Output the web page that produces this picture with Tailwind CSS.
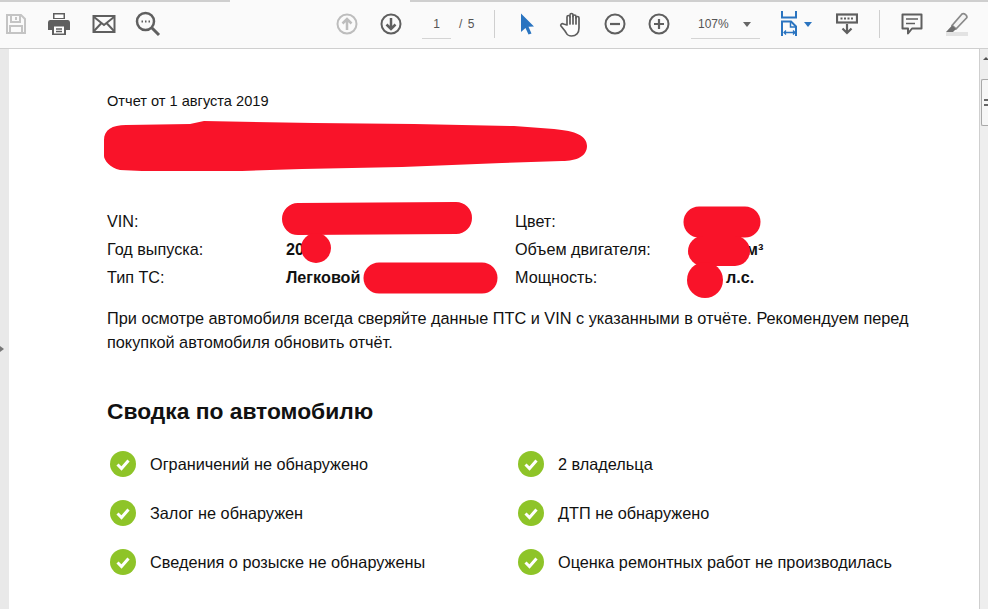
<!DOCTYPE html>
<html lang="ru">
  <head>
    <meta charset="UTF-8" />
    <title>Отчет</title>
    <script src="https://cdn.jsdelivr.net/npm/@tailwindcss/browser@4"></script>
  </head>
  <body class="h-screen overflow-hidden bg-white font-['Liberation_Sans',Arial,sans-serif] text-[#111]">
    <!-- toolbar -->
    <div class="relative flex h-[49px] items-center border-b border-[#cfcfcf] bg-[#fafafa]">
      <div class="absolute left-0 top-0 h-[2px] w-[230px] bg-[#cfcfcf]"></div>
      <div class="absolute right-0 top-0 h-[2px] w-[578px] bg-[#cfcfcf]"></div>

      <div class="flex w-[32px] justify-center">
        <svg width="22" height="22" viewBox="0 0 22 22" fill="none" stroke="#c4c4c4" stroke-width="2"><path d="M2 2h14l4 4v14H2z"/><path d="M6 2v7h9V2M5 20v-7h12v7"/><path d="M11 4v3"/></svg>
      </div>
      <div class="ml-[5px] flex w-11 justify-center">
        <svg width="24" height="24" viewBox="0 0 24 24"><path fill="#5f5f5f" d="M6 1h12v6H6zM3 8h18a2.500 2.500 0 0 1 2 2.500V18h-4v5H5v-5H1v-7.500A2.500 2.500 0 0 1 3 8z"/><path fill="#fff" d="M7.500 2.500h9V6h-9zM7 14.500h10V21.500H7z"/><path stroke="#5f5f5f" stroke-width="1.500" d="M9 17h6M9 19.500h6"/></svg>
      </div>
      <div class="ml-px flex w-11 justify-center">
        <svg width="24" height="20" viewBox="0 0 24 20" fill="none" stroke="#5f5f5f" stroke-width="2"><rect x="1.500" y="2" width="21" height="16"/><path d="M2 3l10 8 10-8M2 17l7.500-8M22 17l-7.500-8"/></svg>
      </div>
      <div class="flex w-11 justify-center">
        <svg width="26" height="26" viewBox="0 0 26 26" fill="none" stroke="#5f5f5f"><circle cx="10.500" cy="10.500" r="8.500" stroke-width="2.500"/><path d="M17 17l7 7" stroke-width="3"/><path d="M6.500 10.500h1.500M10 10.500h1.500M13.500 10.500H15" stroke-width="2"/></svg>
      </div>

      <div class="ml-[155px] flex w-11 justify-center">
        <svg width="22" height="22" viewBox="0 0 22 22" fill="none" stroke="#bdbdbd" stroke-width="2"><circle cx="11" cy="11" r="9.500"/><path d="M11 17V6M6.500 10.500L11 6l4.500 4.500" stroke-width="2.500"/></svg>
      </div>
      <div class="flex w-11 justify-center">
        <svg width="22" height="22" viewBox="0 0 22 22" fill="none" stroke="#5f5f5f" stroke-width="2"><circle cx="11" cy="11" r="9.500"/><path d="M11 5v11M6.500 11.500L11 16l4.500-4.500" stroke-width="2.500"/></svg>
      </div>

      <div class="ml-[9px] h-[29px] w-[29px] border-b border-[#d4d4d4] pt-[7px] text-center text-[12px] leading-[15px] text-[#555]">1</div>
      <div class="ml-2 w-[15px] text-[12px] tracking-[1px] whitespace-nowrap text-[#555]">/ 5</div>

      <div class="ml-[20px] h-7 w-px bg-[#cfcfcf]"></div>

      <div class="ml-[10px] flex w-11 justify-center">
        <svg width="16" height="22" viewBox="0 0 16 22"><path fill="#2a74c0" d="M2 0.500L15 13.500L9.500 13.800L12.500 20.500L9.500 21.500L6.500 15L2 19z"/></svg>
      </div>
      <div class="flex w-11 justify-center">
        <svg width="24" height="25" viewBox="0 0 24 25" fill="#fff" stroke="#5f5f5f" stroke-width="1.700" stroke-linejoin="round" stroke-linecap="round"><path d="M8 13V5a1.500 1.500 0 0 1 3 0V3a1.500 1.500 0 0 1 3 0v1.500a1.500 1.500 0 0 1 3 0V6a1.500 1.500 0 0 1 3 0v10c0 5-3 8-7.500 8S8 22 6 19l-4-5c-1-1.500 1-3 2.500-2z"/><path d="M11 5v7M14 4v8M17 5v7"/></svg>
      </div>
      <div class="flex w-11 justify-center">
        <svg width="22" height="22" viewBox="0 0 22 22" fill="none" stroke="#5f5f5f" stroke-width="2"><circle cx="11" cy="11" r="9.500"/><path d="M6 11h10" stroke-width="2.200"/></svg>
      </div>
      <div class="flex w-11 justify-center">
        <svg width="22" height="22" viewBox="0 0 22 22" fill="none" stroke="#5f5f5f" stroke-width="2"><circle cx="11" cy="11" r="9.500"/><path d="M6 11h10M11 6v10" stroke-width="2.200"/></svg>
      </div>

      <div class="relative ml-[10px] h-[29px] w-[69px] border-b border-[#d4d4d4] pl-[7px] pt-[7px] text-[12px] leading-[15px] text-[#555]">
        107%
        <div class="absolute left-[52px] top-[12px] h-0 w-0 border-x-[4px] border-t-[5px] border-x-transparent border-t-[#666]"></div>
      </div>

      <div class="ml-[20px] flex w-[40px] items-center">
        <svg width="20" height="26" viewBox="0 0 20 26" fill="none" stroke="#2a74c0" stroke-width="2"><path d="M2 0v6.500h14V0M2 25V10.500h9l5 5V25"/><path d="M10.500 10.500v5.500h5.500" stroke-width="1.500"/><path d="M4 21.500h11M6 19.500l-2 2 2 2M13 19.500l2 2-2 2" stroke-width="1.300"/></svg>
        <div class="ml-[4px] h-0 w-0 border-x-[4px] border-t-[5px] border-x-transparent border-t-[#2a74c0]"></div>
      </div>

      <div class="ml-[5px] flex w-11 justify-center">
        <svg width="22" height="22" viewBox="0 0 22 22" fill="none" stroke="#5f5f5f"><rect x="1" y="1.500" width="20" height="8" stroke-width="2.200"/><path d="M4.500 5.500h2M8 5.500h2M11.500 5.500h2M15 5.500h2" stroke-width="2"/><path d="M11 11v9M6.500 15.500L11 20l4.500-4.500" stroke-width="2.200"/></svg>
      </div>

      <div class="ml-[10px] h-7 w-px bg-[#cfcfcf]"></div>

      <div class="ml-[10px] flex w-11 justify-center">
        <svg width="22" height="22" viewBox="0 0 22 22" fill="none" stroke="#5f5f5f" stroke-width="2"><path d="M1.500 1.500h19v14h-9.500l-4 5v-5H1.500z" stroke-linejoin="round"/><path d="M5 6h12M5 10.500h9" stroke-width="1.500"/></svg>
      </div>
      <div class="ml-px flex w-11 justify-center">
        <svg width="24" height="24" viewBox="0 0 24 24"><path fill="#e3e3e3" d="M1 20h22v4H1z"/><path fill="#f4f4f4" stroke="#8a8a8a" stroke-width="1.800" stroke-linejoin="round" d="M17 2c2-1.500 6 2 4.500 4L11 17l-4-3.500z"/><path fill="#6f6f6f" d="M7 13.500l4 3.500-3 3H1z"/></svg>
      </div>
    </div>

    <!-- document area -->
    <div class="flex h-[560px] overflow-hidden">
      <div class="relative w-[9px] shrink-0 bg-[#e9e9e9]">
        <div class="absolute left-0 top-[297px] h-0 w-0 border-y-[3px] border-l-[4px] border-y-transparent border-l-[#777]"></div>
      </div>

      <main class="relative flex-1 bg-white pl-[98px] pr-[65px] pt-[43px]">
        <p class="text-[14.600px] leading-[18px]">Отчет от 1 августа 2019</p>

        <div class="mt-[97px] grid grid-cols-[179px_229px_177px_auto] text-[16.200px] leading-[28px]">
          <div>VIN:</div>
          <div></div>
          <div>Цвет:</div>
          <div></div>
          <div>Год выпуска:</div>
          <div class="font-bold">20</div>
          <div>Объем двигателя:</div>
          <div class="pl-[54px] font-bold">м³</div>
          <div>Тип ТС:</div>
          <div class="font-bold">Легковой</div>
          <div>Мощность:</div>
          <div class="pl-[34px] font-bold">л.с.</div>
        </div>

        <p class="mt-[15px] text-[16.300px] leading-[24px]">При осмотре автомобиля всегда сверяйте данные ПТС и VIN с указанными в отчёте. Рекомендуем перед покупкой автомобиля обновить отчёт.</p>

        <h2 class="mt-[43px] text-[22.800px] leading-[28px] font-bold">Сводка по автомобилю</h2>

        <div class="mt-[25px] grid grid-cols-[408px_auto] gap-y-[21px] text-[16.270px] leading-[28px]">
          <div class="flex items-center">
            <svg class="ml-[3px] mr-[14px]" width="26" height="26" viewBox="0 0 26 26"><circle cx="13" cy="13" r="13" fill="#8ec428"/><path d="M7.500 13.500l4 4 7-8" fill="none" stroke="#fff" stroke-width="3"/></svg>
            <span>Ограничений не обнаружено</span>
          </div>
          <div class="flex items-center">
            <svg class="ml-[3px] mr-[14px]" width="26" height="26" viewBox="0 0 26 26"><circle cx="13" cy="13" r="13" fill="#8ec428"/><path d="M7.500 13.500l4 4 7-8" fill="none" stroke="#fff" stroke-width="3"/></svg>
            <span>2 владельца</span>
          </div>
          <div class="flex items-center">
            <svg class="ml-[3px] mr-[14px]" width="26" height="26" viewBox="0 0 26 26"><circle cx="13" cy="13" r="13" fill="#8ec428"/><path d="M7.500 13.500l4 4 7-8" fill="none" stroke="#fff" stroke-width="3"/></svg>
            <span>Залог не обнаружен</span>
          </div>
          <div class="flex items-center">
            <svg class="ml-[3px] mr-[14px]" width="26" height="26" viewBox="0 0 26 26"><circle cx="13" cy="13" r="13" fill="#8ec428"/><path d="M7.500 13.500l4 4 7-8" fill="none" stroke="#fff" stroke-width="3"/></svg>
            <span>ДТП не обнаружено</span>
          </div>
          <div class="flex items-center">
            <svg class="ml-[3px] mr-[14px]" width="26" height="26" viewBox="0 0 26 26"><circle cx="13" cy="13" r="13" fill="#8ec428"/><path d="M7.500 13.500l4 4 7-8" fill="none" stroke="#fff" stroke-width="3"/></svg>
            <span>Сведения о розыске не обнаружены</span>
          </div>
          <div class="flex items-center">
            <svg class="ml-[3px] mr-[14px]" width="26" height="26" viewBox="0 0 26 26"><circle cx="13" cy="13" r="13" fill="#8ec428"/><path d="M7.500 13.500l4 4 7-8" fill="none" stroke="#fff" stroke-width="3"/></svg>
            <span>Оценка ремонтных работ не производилась</span>
          </div>
        </div>
      </main>

      <div class="relative w-[9px] shrink-0 border-l border-[#cfcfcf] bg-[#eeeeee]">
        <div class="absolute left-[3px] top-[8px] h-0 w-0 border-x-[3px] border-b-[3px] border-x-transparent border-b-[#555]"></div>
        <div class="absolute left-[1px] top-[30px] h-[47px] w-[7px] rounded-l-[2px] border border-r-0 border-[#a8a8a8] bg-[#f6f6f6]"></div>
        <div class="absolute left-[4px] top-[50px] h-[7px] w-[4px] border-y-2 border-[#666]"></div>
      </div>
    </div>

    <!-- red scribbles drawn over the document -->
    <svg class="absolute left-0 top-0" width="988" height="609" viewBox="0 0 988 609">
      <path fill="#f91329" d="M104 140c0-10 8-15 22-15l64-1 14-3 110 2 100 1 100 2 40 3c22 2 33 7 33 17 0 10-10 15-25 15l-60 2-100 4-100 2-60 2-100 0-22-1c-10-2-16-10-16-14z"/>
      <g stroke="#f91329" fill="none" stroke-linecap="round">
        <path d="M298 219L456 218" stroke-width="32"/>
        <path d="M379 278H482" stroke-width="31"/>
        <path d="M699 222H745" stroke-width="31"/>
        <path d="M703 251H735" stroke-width="30"/>
      </g>
      <circle cx="316" cy="248" r="15" fill="#f91329"/>
      <circle cx="705" cy="280" r="18" fill="#f91329"/>
    </svg>
  </body>
</html>
